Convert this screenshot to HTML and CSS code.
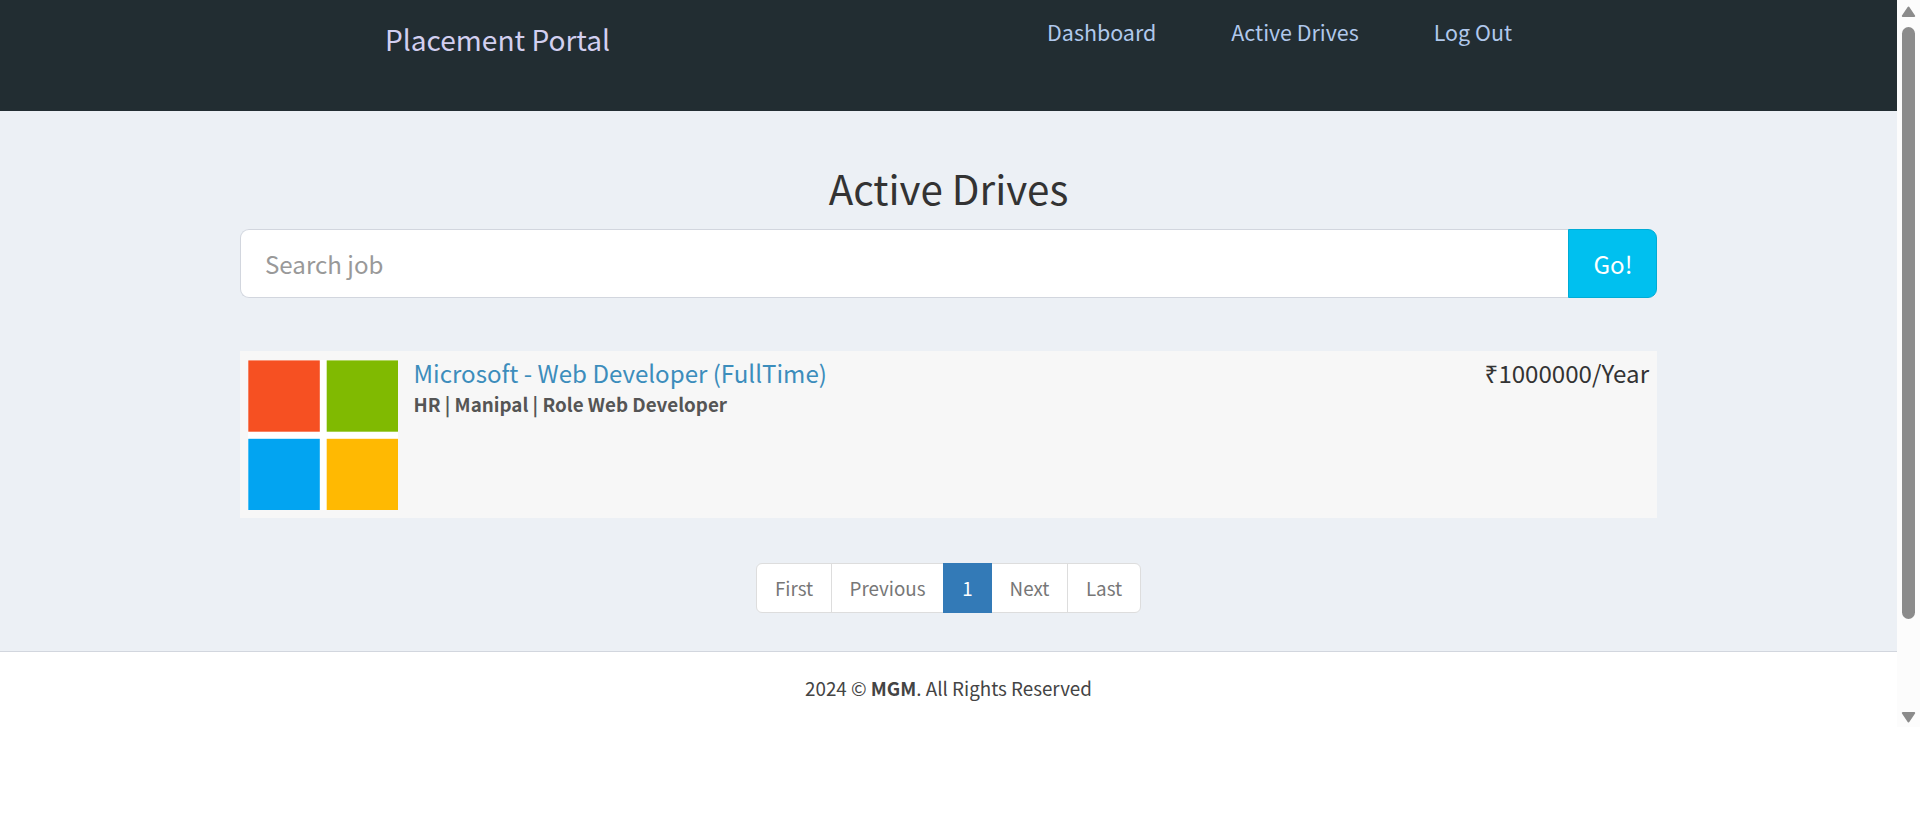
FILE: index.html
```html
<!DOCTYPE html>
<html lang="en">
<head>
<meta charset="utf-8">
<title>Placement Portal</title>
<link rel="stylesheet" href="styles.css">
</head>
<body>
<div class="window">
  <div class="page">
    <header class="header">
      <a class="brand">Placement Portal</a>
      <nav class="nav">
        <a class="nav-dashboard">Dashboard</a>
        <a class="nav-drives">Active Drives</a>
        <a class="nav-logout">Log Out</a>
      </nav>
    </header>
    <main class="main">
      <h1 class="title"><span>Active Drives</span></h1>
      <div class="search">
        <div class="search-input"><span>Search job</span></div>
        <div class="search-button"><span>Go!</span></div>
      </div>
      <article class="drive">
        <svg class="logo" viewBox="0 0 150 150">
          <rect width="150" height="150" fill="#fff"/>
          <rect x="0.3" y="0.4" width="71.5" height="71.3" fill="#f65022"/>
          <rect x="78.7" y="0.4" width="71.3" height="71.3" fill="#80ba01"/>
          <rect x="0.3" y="78.8" width="71.5" height="71.2" fill="#02a4f1"/>
          <rect x="78.7" y="78.8" width="71.3" height="71.2" fill="#ffb902"/>
        </svg>
        <div class="drive-info">
          <div class="drive-title"><span>Microsoft - Web Developer (FullTime)</span></div>
          <div class="drive-meta"><span>HR | Manipal | Role Web Developer</span></div>
        </div>
        <div class="drive-pay"><span>₹1000000/Year</span></div>
      </article>
      <div class="pagination">
        <a class="pg-first">First</a>
        <a class="pg-prev">Previous</a>
        <a class="pg-active">1</a>
        <a class="pg-next">Next</a>
        <a class="pg-last">Last</a>
      </div>
    </main>
    <footer class="footer"><span>2024 © <b>MGM</b>. All Rights Reserved</span></footer>
  </div>
  <div class="scrollbar">
    <svg class="arrow" viewBox="0 0 15 12"><path d="M7.5 1.5 L13.2 10 H1.8 Z" fill="#8b8b8b" stroke="#8b8b8b" stroke-width="2" stroke-linejoin="round"/></svg>
    <div class="thumb"></div>
    <svg class="arrow arrow-down" viewBox="0 0 15 12"><path d="M7.5 10.5 L1.8 2 H13.2 Z" fill="#8b8b8b" stroke="#8b8b8b" stroke-width="2" stroke-linejoin="round"/></svg>
  </div>
</div>
</body>
</html>
```
FILE: styles.css
```css
* { box-sizing: border-box; }
body {
  margin: 0;
  background: #fff;
  color: #333;
  font-family: "Source Sans Pro", "Noto Sans CJK JP", "Noto Sans", sans-serif;
  font-size: 18.8px;
  white-space: nowrap;
  overflow: hidden;
}
.window { display: flex; height: 727px; }
.page { width: 1897px; }
.header {
  display: flex;
  justify-content: space-between;
  height: 111px;
  padding: 0 385px 0 385px;
  background: #222d32;
}
.brand { font-size: 28.1px; line-height: 78px; color: #d2cff0; }
.nav { display: flex; gap: 75px; font-size: 21.45px; line-height: 63px; color: #b0c8ec; }
.main {
  height: 540px;
  padding: 52px 240px 0;
  background: #ecf0f5;
}
.title {
  margin: 0 0 16px;
  text-align: center;
  font-size: 40.3px;
  font-weight: 400;
  line-height: 50px;
}
.search { display: flex; height: 69px; font-size: 24.1px; line-height: 67px; }
.search-input {
  flex: 1;
  padding-left: 24px;
  border: 1px solid #d2d6de;
  border-right: 0;
  border-radius: 9px 0 0 9px;
  background: #fff;
  color: #999;
}
.search-button {
  width: 89px;
  padding-left: 1px;
  text-align: center;
  border: 1px solid #00acd6;
  border-radius: 0 9px 9px 0;
  background: #00c0ef;
  color: #fff;
}
.drive {
  display: flex;
  height: 167px;
  margin-top: 53px;
  padding: 8px;
  background: #f7f7f7;
}
.logo { width: 150px; height: 150px; margin-top: 0.5px; }
.drive-info { flex: 1; padding-left: 15.5px; }
.drive-title { font-size: 24.1px; line-height: 28px; color: #3c8dbc; }
.drive-meta { line-height: 33px; font-weight: 700; color: #555; }
.drive-pay { font-size: 24.1px; line-height: 28px; }
.pagination {
  display: flex;
  width: 385px;
  height: 50px;
  margin: 45px auto 0;
  border: 1px solid #ddd;
  border-radius: 6px;
  background: #fff;
  color: #777;
  text-align: center;
  line-height: 47px;
}
.pg-first { width: 75px; border-right: 1px solid #ddd; }
.pg-prev { width: 111px; }
.pg-active { width: 49px; height: 50px; margin: -1px 0; padding-top: 1px; background: #337ab7; color: #fff; }
.pg-next { width: 76px; border-right: 1px solid #ddd; }
.pg-last { flex: 1; }
.footer {
  height: 76px;
  border-top: 1px solid #d2d6de;
  text-align: center;
  line-height: 72px;
  color: #444;
}
.scrollbar {
  display: flex;
  flex-direction: column;
  align-items: center;
  width: 23px;
  padding: 6px 0 4px;
  background: #fcfcfc;
}
.arrow { width: 15px; height: 12px; }
.thumb { width: 13px; height: 592px; margin-top: 9px; border-radius: 7px; background: #8b8b8b; }
.arrow-down { margin-top: auto; }
```
